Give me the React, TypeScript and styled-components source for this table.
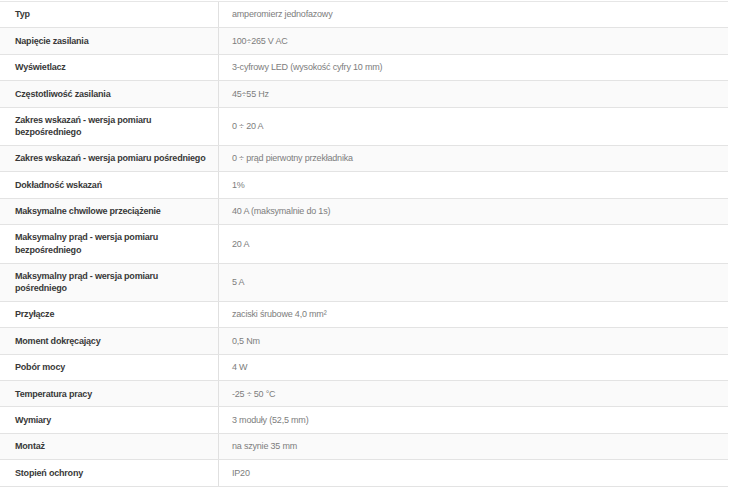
import React from "react";
import styled, { createGlobalStyle } from "styled-components";

const GlobalStyle = createGlobalStyle`
  body {
    margin: 0;
    background: #ffffff;
  }
`;

const SpecTable = styled.div`
  width: 728px;
  margin-top: 1px;
  border-top: 1px solid #e6e6e6;
  font-family: "Liberation Sans", Arial, sans-serif;
`;

const SpecRow = styled.div<{ $tall?: boolean; $shaded?: boolean }>`
  display: grid;
  grid-template-columns: 219px 1fr;
  box-sizing: border-box;
  height: ${(p) => (p.$tall ? "38.4px" : "26.4px")};
  background: ${(p) => (p.$shaded ? "#fafafa" : "#ffffff")};
  border-bottom: 1px solid #e3e3e3;
`;

const Label = styled.div`
  display: flex;
  align-items: center;
  padding-left: 15px;
  border-right: 1px solid #e0e0e0;
  font-size: 9px;
  letter-spacing: -0.2px;
  font-weight: bold;
  line-height: 12.5px;
  color: #383838;
  white-space: pre-line;
`;

const Value = styled.div`
  display: flex;
  align-items: center;
  padding-left: 13px;
  font-size: 9px;
  letter-spacing: -0.2px;
  line-height: 12.5px;
  color: #7d7d7d;
`;

const specs: [string, string][] = [
  ["Typ", "amperomierz jednofazowy"],
  ["Napięcie zasilania", "100÷265 V AC"],
  ["Wyświetlacz", "3-cyfrowy LED (wysokość cyfry 10 mm)"],
  ["Częstotliwość zasilania", "45÷55 Hz"],
  ["Zakres wskazań - wersja pomiaru\nbezpośredniego", "0 ÷ 20 A"],
  ["Zakres wskazań - wersja pomiaru pośredniego", "0 ÷ prąd pierwotny przekładnika"],
  ["Dokładność wskazań", "1%"],
  ["Maksymalne chwilowe przeciążenie", "40 A (maksymalnie do 1s)"],
  ["Maksymalny prąd - wersja pomiaru\nbezpośredniego", "20 A"],
  ["Maksymalny prąd - wersja pomiaru\npośredniego", "5 A"],
  ["Przyłącze", "zaciski śrubowe 4,0 mm²"],
  ["Moment dokręcający", "0,5 Nm"],
  ["Pobór mocy", "4 W"],
  ["Temperatura pracy", "-25 ÷ 50 °C"],
  ["Wymiary", "3 moduły (52,5 mm)"],
  ["Montaż", "na szynie 35 mm"],
  ["Stopień ochrony", "IP20"],
];

const App: React.FC = () => {
  return (
    <>
      <GlobalStyle />
      <SpecTable>
        {specs.map(([label, value], index) => (
          <SpecRow key={index} $tall={label.includes("\n")} $shaded={index % 2 === 1}>
            <Label>{label}</Label>
            <Value>{value}</Value>
          </SpecRow>
        ))}
      </SpecTable>
    </>
  );
};

export default App;
